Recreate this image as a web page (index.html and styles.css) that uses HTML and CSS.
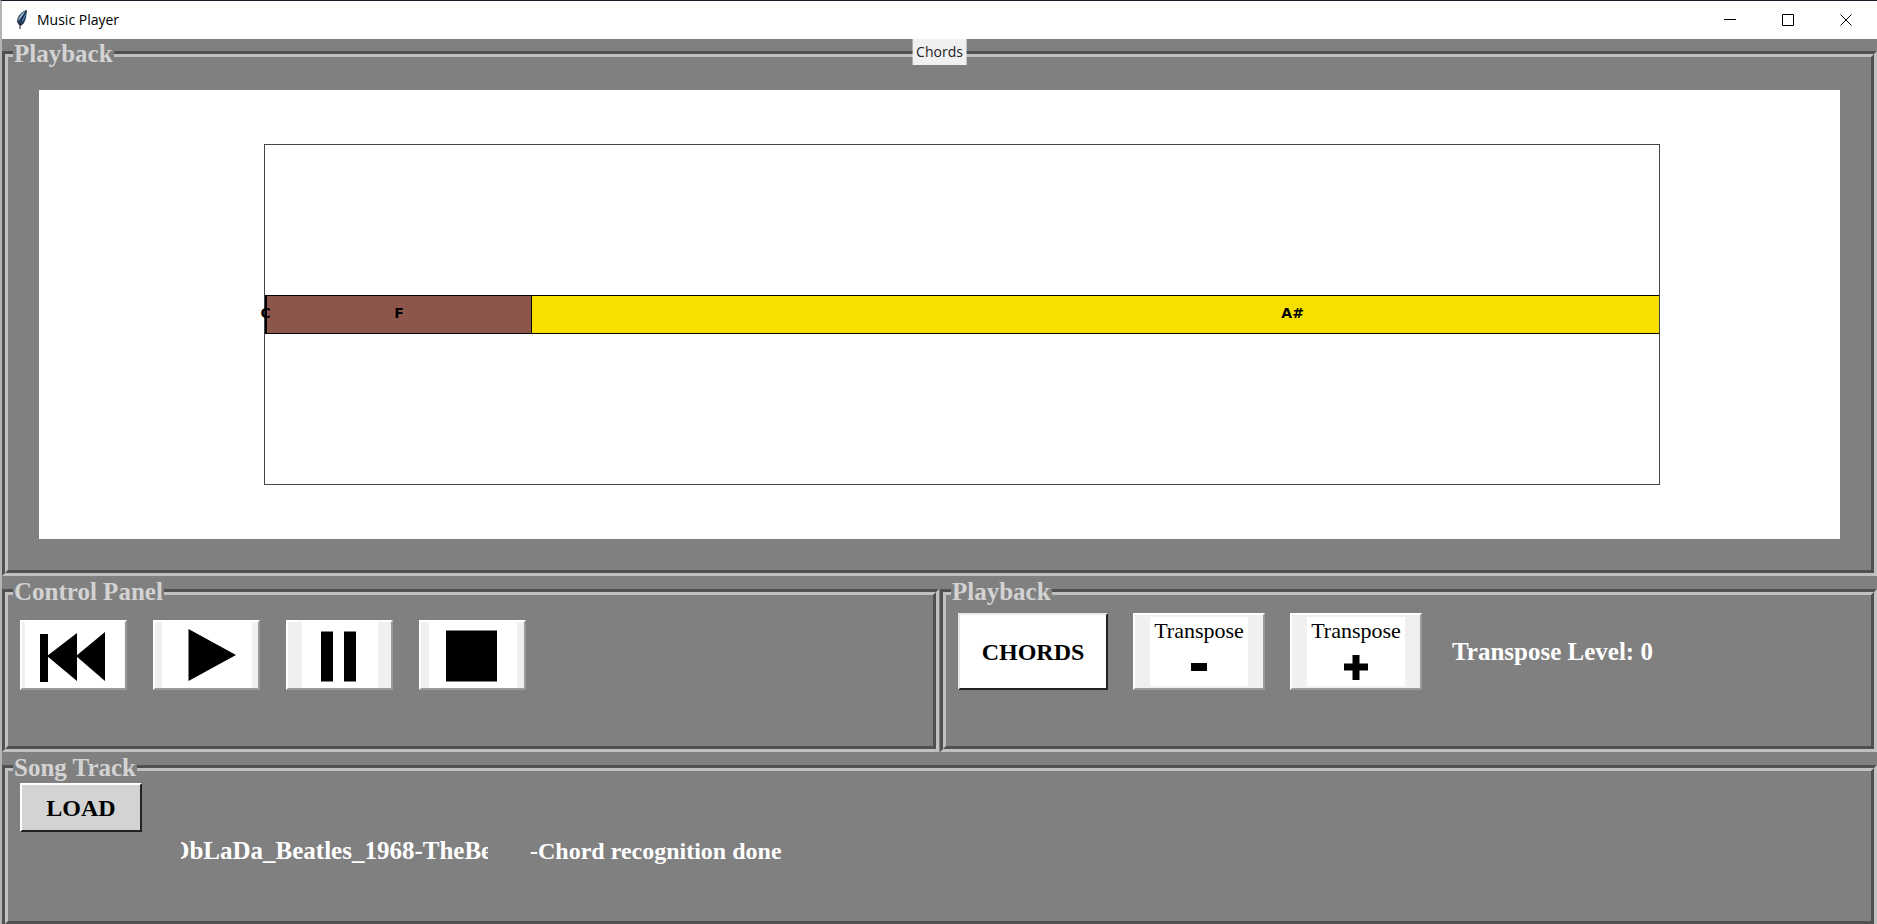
FILE: index.html
```html
<!DOCTYPE html>
<html lang="en">
<head>
<meta charset="utf-8">
<title>Music Player</title>
<link rel="stylesheet" href="styles.css">
</head>
<body>
<div class="window">
  <header class="titlebar">
    <svg class="feather" viewBox="0 0 14 22" aria-hidden="true">
      <path d="M12 1C7 2 2 7 2 13l2 3 1 1c3-1 5-4 6-8z" fill="#26384f"/>
      <path d="M11 2C8 3 4 7 3 12l2-2z" fill="#9cc0e4"/>
      <path d="M11.500 3c-1 5-3 9-5.500 11l-1-1z" fill="#4a86cc"/>
      <path d="M11 2C8 8 5 13 5 20" fill="none" stroke="#141c28"/>
    </svg>
    <h1 class="title">Music Player</h1>
    <div class="window-buttons">
      <button class="window-button" aria-label="Minimize"><svg viewBox="0 0 12 12"><path d="M0 5.500h12"/></svg></button>
      <button class="window-button" aria-label="Maximize"><svg viewBox="0 0 12 12"><path d="M.5.5h11v11H.5z"/></svg></button>
      <button class="window-button" aria-label="Close"><svg viewBox="0 0 12 12"><path d="M.5.5l11 11M11.500.5l-11 11"/></svg></button>
    </div>
  </header>
  <main class="content">
    <div class="chords-label">Chords</div>
    <section class="panel panel-chart">
      <h2 class="legend">Playback</h2>
      <div class="panel-body chart-body">
        <div class="canvas">
          <div class="plot">
            <div class="track">
              <div class="chord chord-c"><span>C</span></div>
              <div class="chord chord-f">F</div>
              <div class="chord chord-asharp"><span>A#</span></div>
            </div>
          </div>
        </div>
      </div>
    </section>
    <div class="controls">
      <section class="panel">
        <h2 class="legend">Control Panel</h2>
        <div class="panel-body transport">
          <button class="tile" aria-label="Rewind"><svg viewBox="0 0 103 66"><path class="paper" d="M3 0h99v66H3z"/><path d="M18 12h8v48h-8zM25 34L55 11v48zM54 34L83 10v49z"/></svg></button>
          <button class="tile" aria-label="Play"><svg viewBox="0 0 103 66"><path class="paper" d="M7 0h90v66H7z"/><path d="M33.500 7L81 33 33.500 59z"/></svg></button>
          <button class="tile" aria-label="Pause"><svg viewBox="0 0 103 66"><path class="paper" d="M14 0h76v66H14z"/><path d="M33 9.500h12v50H33zM56 9.500h12v50H56z"/></svg></button>
          <button class="tile" aria-label="Stop"><svg viewBox="0 0 103 66"><path class="paper" d="M8 0h88v66H8z"/><path d="M25 8.500h51v51H25z"/></svg></button>
        </div>
      </section>
      <section class="panel">
        <h2 class="legend">Playback</h2>
        <div class="panel-body chord-controls">
          <button class="push push-chords">CHORDS</button>
          <button class="tile tile-transpose"><span class="card">Transpose<svg viewBox="0 0 26 26" role="img" aria-label="down"><path d="M5 9h16v8H5z"/></svg></span></button>
          <button class="tile tile-transpose"><span class="card">Transpose<svg viewBox="0 0 26 26" role="img" aria-label="up"><path d="M9.500 1h7v8.500H25v7h-8.500V26h-7v-9.500H1v-7h8.500z"/></svg></span></button>
          <p class="level">Transpose Level: 0</p>
        </div>
      </section>
    </div>
    <section class="panel">
      <h2 class="legend">Song Track</h2>
      <div class="panel-body song">
        <button class="push push-load">LOAD</button>
        <div class="song-info">
          <p class="ticker">ObLaDa_Beatles_1968-TheBe</p>
          <p class="status">-Chord recognition done</p>
        </div>
      </div>
    </section>
  </main>
</div>
</body>
</html>
```
FILE: styles.css
```css
* { box-sizing: border-box; }
body {
  margin: 0;
  overflow: hidden;
  font: bold 24px/28px "Liberation Serif", "Times New Roman", serif;
  background: #808080;
}
h1, h2, p { margin: 0; font: inherit; }
button { padding: 0; font: inherit; color: #000; }
.window {
  display: flex;
  flex-direction: column;
  min-height: calc(100vh + 3px);
  border-top: 1px solid #1f1b2c;
  border-left: 2px solid #b4b4b4;
}
.titlebar {
  display: flex;
  align-items: center;
  height: 38px;
  padding: 0 2px 0 13px;
  background: #fff;
}
.feather { width: 14px; height: 22px; margin-right: 8px; }
.title { font: 14px/20px "Open Sans", "Noto Sans", sans-serif; }
.window-buttons { display: flex; margin-left: auto; }
.window-button {
  display: grid;
  place-items: center;
  width: 58px;
  height: 38px;
  border: 0;
  background: none;
}
.window-button svg { width: 12px; height: 12px; fill: none; stroke: #000; }
.content {
  position: relative;
  flex: 1;
  display: flex;
  flex-direction: column;
  gap: 13px;
  padding-top: 12px;
  background: #808080;
}
.chords-label {
  position: absolute;
  z-index: 2;
  top: 0;
  left: 50%;
  transform: translateX(-50%);
  padding: 0 4px;
  background: #f0f0f0;
  color: #222;
  font: 14px/26px "Open Sans", "Noto Sans", sans-serif;
}
.panel {
  position: relative;
  display: flex;
  flex-direction: column;
  border: 3px solid;
  border-color: #505050 #c0c0c0 #c0c0c0 #505050;
}
.panel-body {
  flex: 1;
  border: 3px solid;
  border-color: #c0c0c0 #505050 #505050 #c0c0c0;
}
.legend {
  position: absolute;
  top: -13px;
  left: 8px;
  padding: 0 1px;
  background: #808080;
  color: #d3d3d3;
  font-size: 25px;
  line-height: 26px;
}
.panel-chart { flex: 1; }
.chart-body { display: flex; padding: 33px 31px 31px; }
.canvas {
  flex: 1;
  display: grid;
  grid-template-columns: 125fr 775fr 100fr;
  padding: 54px 0;
  background: #fff;
}
.plot {
  grid-column: 2;
  display: flex;
  align-items: center;
  border: 1px solid #444;
}
.track {
  flex: 1;
  display: flex;
  height: 39px;
  border: 1px solid #000;
  border-width: 1px 0;
  font: bold 14px/35px "DejaVu Sans", sans-serif;
}
.chord { display: flex; justify-content: center; border-right: 1px solid #000; }
.chord-c { position: relative; z-index: 1; width: 2px; background: #000; }
.chord-f { width: 19%; background: #8c564b; }
.chord-asharp { flex: 1; border-right: 0; background: #f7e000; }
.chord-asharp span { padding-left: 35%; }
.controls { display: grid; grid-template-columns: 1fr 1fr; gap: 1px; }
.transport {
  display: flex;
  gap: 26px;
  padding: 25px 12px 56px;
}
.tile {
  display: grid;
  place-items: center;
  width: 107px;
  height: 70px;
  border: 2px solid;
  border-color: #fff #9a9a9a #9a9a9a #fff;
  background: #f0f0f0;
}
.tile > svg { width: 103px; height: 66px; }
.paper { fill: #fff; }
.chord-controls {
  display: flex;
  gap: 25px;
  padding: 18px 12px 55px;
}
.push {
  border: 2px solid;
  border-color: #fff #222 #222 #fff;
}
.push-chords { width: 150px; height: 77px; background: #fff; border-color: #e8e8e8 #222 #222 #e8e8e8; }
.tile-transpose { width: 132px; height: 77px; }
.card {
  display: flex;
  flex-direction: column;
  align-items: center;
  width: 98px;
  height: 69px;
  background: #fff;
  font-size: 22px;
  font-weight: normal;
  line-height: 28px;
}
.card svg { width: 26px; height: 26px; margin-top: 9px; }
.level { align-self: center; padding-left: 5px; color: #fff; font-size: 25px; }
.song { padding: 12px 12px 56px; }
.push-load { display: block; width: 122px; height: 49px; background: #d3d3d3; }
.song-info {
  display: flex;
  gap: 42px;
  padding: 5px 0 0 161px;
  color: #fff;
}
.ticker {
  width: 307px;
  overflow: hidden;
  white-space: nowrap;
  text-indent: -11px;
  font-size: 25px;
}
```
